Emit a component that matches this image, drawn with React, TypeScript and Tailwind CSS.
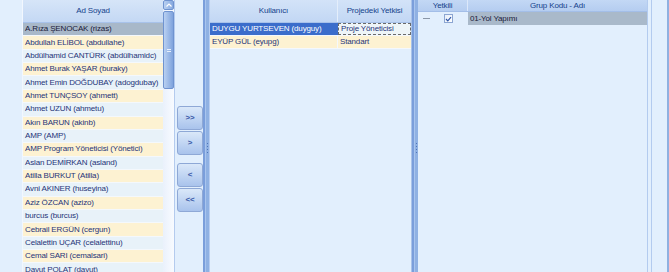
import React from 'react';

const users = [
  'A.Rıza ŞENOCAK (rizas)',
  'Abdullah ELİBOL (abdullahe)',
  'Abdülhamid CANTÜRK (abdülhamidc)',
  'Ahmet Burak YAŞAR (buraky)',
  'Ahmet Emin DOĞDUBAY (adogdubay)',
  'Ahmet TUNÇSOY (ahmett)',
  'Ahmet UZUN (ahmetu)',
  'Akın BARUN (akinb)',
  'AMP (AMP)',
  'AMP Program Yöneticisi (Yönetici)',
  'Aslan DEMİRKAN (asland)',
  'Atilla BURKUT (Atilla)',
  'Avni AKINER (huseyina)',
  'Aziz ÖZCAN (azizo)',
  'burcus (burcus)',
  'Cebrail ERGÜN (cergun)',
  'Celalettin UÇAR (celalettinu)',
  'Cemal SARI (cemalsari)',
  'Davut POLAT (davut)',
];

const MoveButton: React.FC<{ label: string; className?: string }> = ({ label, className = '' }) => (
  <button
    className={`w-[26px] h-[24px] rounded-[3px] border border-[#8ea8d6] bg-gradient-to-b from-[#dae8f9] to-[#a9c3ec] text-[8px] font-bold leading-none text-[#3a5aa8] flex items-center justify-center ${className}`}
  >
    {label}
  </button>
);

const Splitter: React.FC = () => (
  <div className="w-[6px] h-full flex bg-[#8fb1e3]">
    <div className="w-[2px] h-full bg-[#7a9edb]" />
    <div className="w-[1px] h-full bg-[#a9c5ee]" />
    <div className="flex-1 h-full flex flex-col items-center pt-[143px] gap-[2px]">
      <div className="w-[1px] h-[1px] bg-[#4f74b8]" />
      <div className="w-[1px] h-[1px] bg-[#4f74b8]" />
      <div className="w-[1px] h-[1px] bg-[#4f74b8]" />
      <div className="w-[1px] h-[1px] bg-[#4f74b8]" />
    </div>
  </div>
);

const App: React.FC = () => {
  return (
    <div
      className="w-[669px] h-[272px] flex overflow-hidden bg-[#e2effd] text-[8px] tracking-[-0.15px]"
      style={{ fontFamily: '"Liberation Sans", Arial, sans-serif' }}
    >
      {/* Left margin */}
      <div className="w-[23px] h-full border-r border-[#f2f7fe]" />

      {/* Users list */}
      <div className="w-[140px] h-full flex flex-col">
        <div className="h-[23px] shrink-0 flex items-center justify-center bg-gradient-to-b from-[#d6e5f8] to-[#c4d8f4] border-b border-[#a8c2ea] text-[#15428b]">
          Ad Soyad
        </div>
        {users.map((name, i) => (
          <div
            key={name}
            className={`h-[13.36px] shrink-0 flex items-center pl-[2px] border-b border-[#f4f8fc] whitespace-nowrap overflow-hidden ${
              i === 0
                ? 'bg-[#a8b8c9] text-[#1a1a3a]'
                : i % 2 === 1
                ? 'bg-[#fdf2d2] text-[#1f3478]'
                : 'bg-[#e8f2f9] text-[#1f3478]'
            }`}
          >
            {name}
          </div>
        ))}
      </div>

      {/* Scrollbar */}
      <div className="w-[12px] h-full flex flex-col bg-gradient-to-r from-[#eaf1fc] to-[#f8fbff] border-r border-[#b4cbee]">
        <div className="h-[10px] shrink-0 rounded-[2px] border border-[#6f93d0] bg-gradient-to-r from-[#b9d0f1] to-[#85a8df] flex items-center justify-center">
          <svg width="6" height="4" viewBox="0 0 6 4">
            <path d="M0.5 3.5 L3 1 L5.5 3.5" fill="none" stroke="#ffffff" strokeWidth="1.2" />
          </svg>
        </div>
        <div className="h-[78px] shrink-0 mt-[1px] rounded-[2px] border border-[#6f93d0] bg-gradient-to-r from-[#b9d0f1] to-[#7fa3dd] flex items-center justify-center">
          <div className="flex flex-col gap-[1px]">
            <div className="w-[4px] h-[1px] bg-[#e8f0fc]" />
            <div className="w-[4px] h-[1px] bg-[#e8f0fc]" />
          </div>
        </div>
      </div>

      {/* Move buttons */}
      <div className="w-[28px] h-full flex flex-col pl-[2px] pt-[106px]">
        <MoveButton label="&gt;&gt;" />
        <MoveButton label="&gt;" className="mt-[1px]" />
        <MoveButton label="&lt;" className="mt-[8px]" />
        <MoveButton label="&lt;&lt;" className="mt-[1px]" />
      </div>

      <Splitter />
      <div className="w-[1px] h-full bg-[#b7cdf0]" />

      {/* Assigned users */}
      <div className="w-[202px] h-full flex flex-col border-r border-[#a9c3ea]">
        <div className="h-[23px] shrink-0 flex bg-gradient-to-b from-[#d3e3f8] to-[#c2d7f4] border-b border-[#a8c2ea] text-[#15428b]">
          <div className="w-[128px] flex items-center justify-center border-r border-[#e4eefb]">Kullanıcı</div>
          <div className="flex-1 flex items-center justify-center">Projedeki Yetkisi</div>
        </div>
        <div className="h-[13px] shrink-0 flex border-b border-[#f4f8fc] whitespace-nowrap">
          <div className="w-[128px] flex items-center pl-[2px] bg-[#3b6dcb] text-white">DUYGU YURTSEVEN (duyguy)</div>
          <div className="flex-1 flex items-center pl-[2px] bg-[#eef5f8] text-[#1f3478] border border-dashed border-[#6a6a6a]">
            Proje Yöneticisi
          </div>
        </div>
        <div className="h-[13px] shrink-0 flex bg-[#fdf2d2] text-[#1f3478] border-b border-[#f4f8fc] whitespace-nowrap">
          <div className="w-[128px] flex items-center pl-[2px] border-r border-[#f4f8fc]">EYÜP GÜL (eyupg)</div>
          <div className="flex-1 flex items-center pl-[2px]">Standart</div>
        </div>
      </div>

      <Splitter />

      {/* Groups */}
      <div className="w-[230px] h-full flex flex-col border-r border-[#b3cbef]">
        <div className="h-[12px] shrink-0 flex bg-gradient-to-b from-[#c3d8f5] to-[#b5cdf0] border-b border-[#a3bee8] text-[#15428b]">
          <div className="w-[50px] flex items-center justify-center border-r border-[#dce8fa]">Yetkili</div>
          <div className="flex-1 flex items-center justify-center">Grup Kodu - Adı</div>
        </div>
        <div className="h-[13px] shrink-0 flex">
          <div className="w-[50px] flex items-center">
            <div className="w-[7px] h-[1px] ml-[5px] bg-[#8a97a8]" />
            <div className="w-[9px] h-[9px] ml-[14px] border border-[#8ca6d2] bg-gradient-to-br from-[#e6eef9] to-[#ffffff] flex items-center justify-center">
              <svg width="7" height="6" viewBox="0 0 7 6">
                <path d="M1 3 L2.8 4.8 L6 1.2" fill="none" stroke="#2f56a8" strokeWidth="1.2" />
              </svg>
            </div>
          </div>
          <div className="flex-1 flex items-center pl-[2px] bg-[#a9b9ca] text-[#1a1a3a]">01-Yol Yapımı</div>
        </div>
      </div>

      {/* Right margin */}
      <div className="w-[3px] h-full" />
      <div className="w-[1px] h-full bg-[#b3cbef]" />
      <div className="flex-1 h-full" />
      <div className="w-[2px] h-full bg-[#8fb0e0]" />
    </div>
  );
};

export default App;
